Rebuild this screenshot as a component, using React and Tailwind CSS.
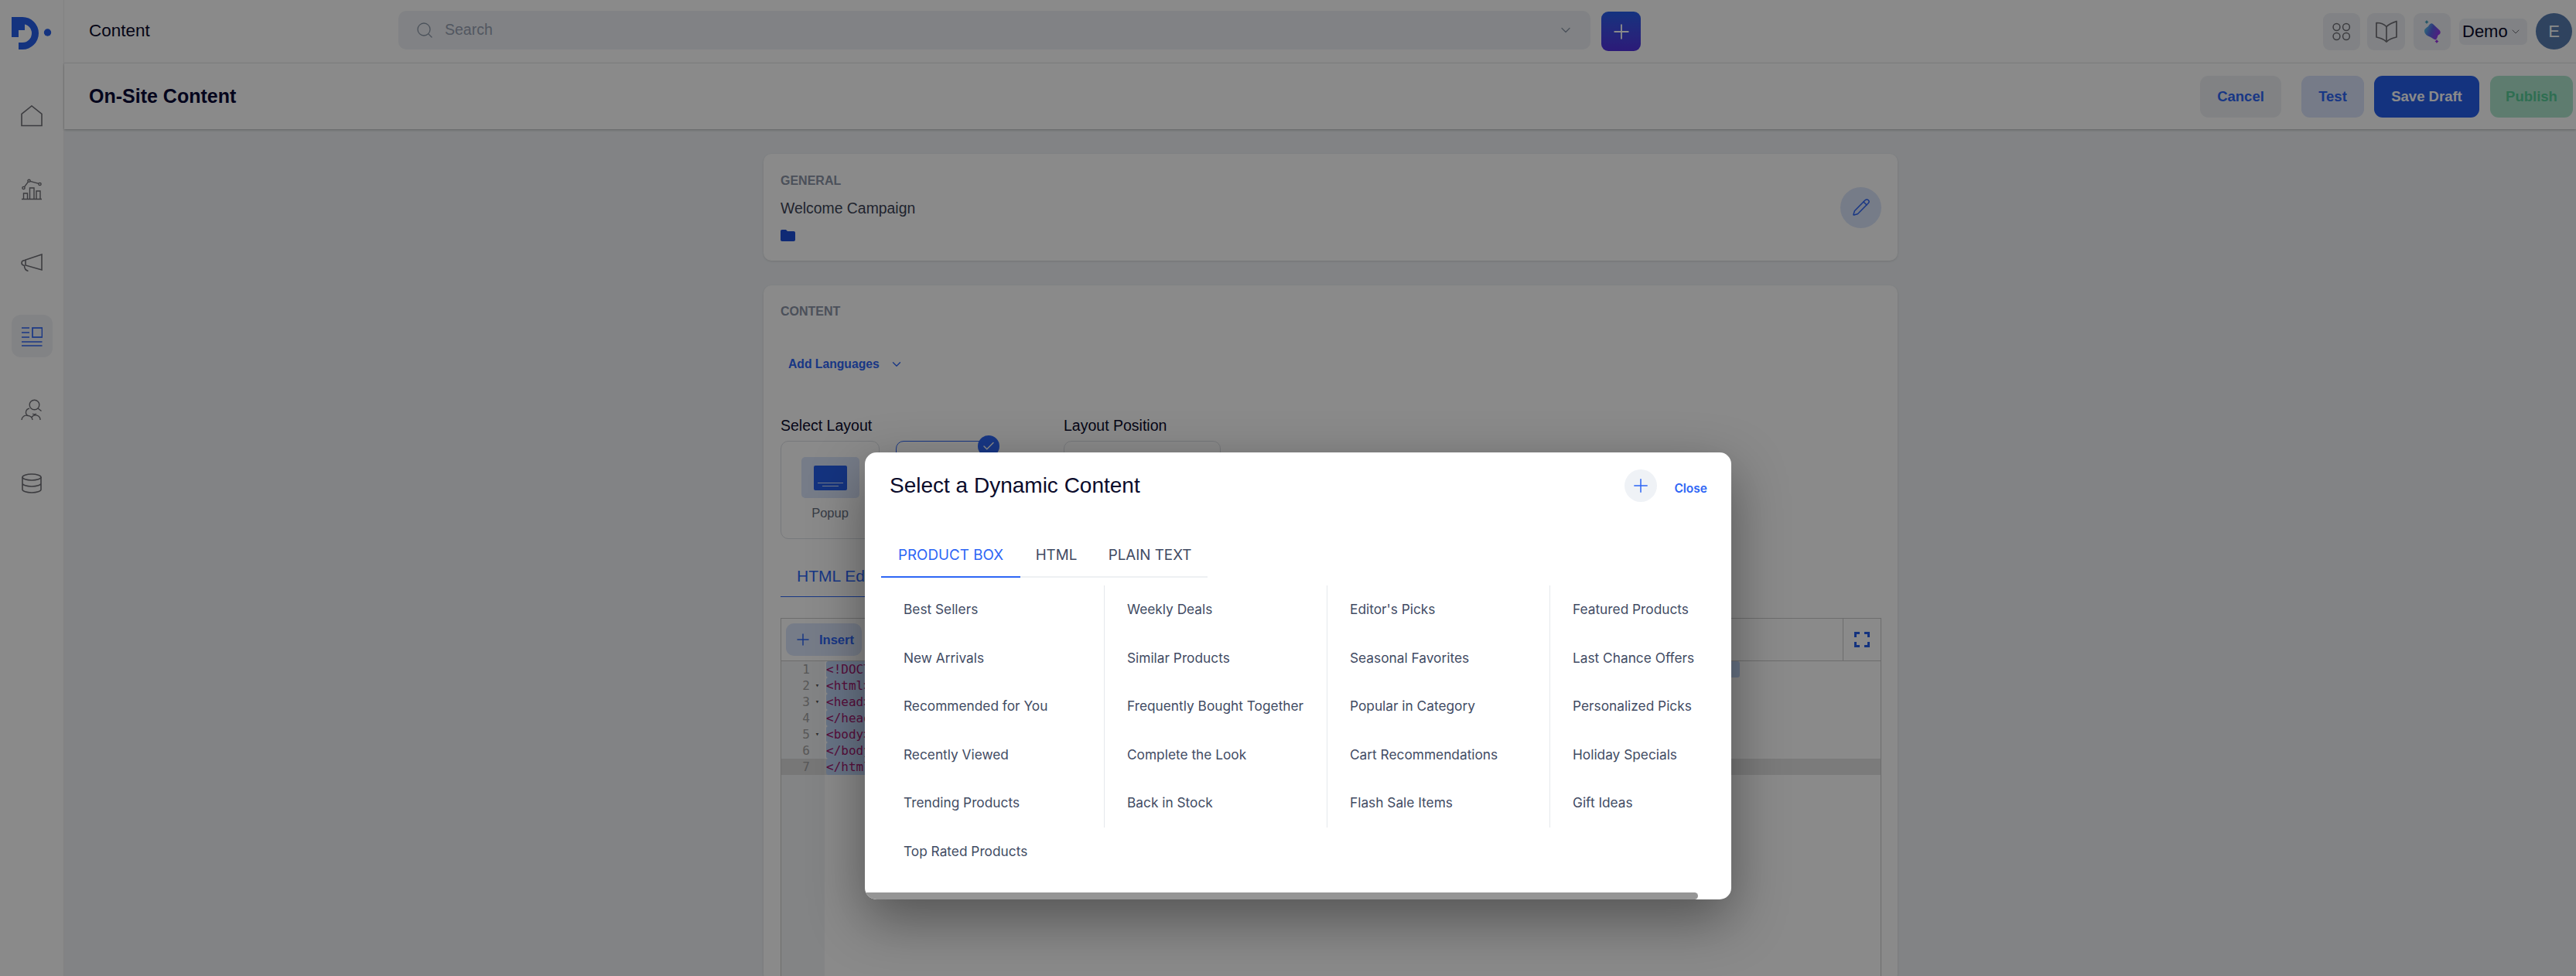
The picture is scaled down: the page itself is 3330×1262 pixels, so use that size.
import { Search, ChevronDown, Plus, Pencil, Check } from "lucide-react";

const sans = "font-['Liberation_Sans',Arial,sans-serif]";
const inter = "font-['Inter',sans-serif]";

const items = [
  "Best Sellers", "Weekly Deals", "Editor's Picks", "Featured Products",
  "New Arrivals", "Similar Products", "Seasonal Favorites", "Last Chance Offers",
  "Recommended for You", "Frequently Bought Together", "Popular in Category", "Personalized Picks",
  "Recently Viewed", "Complete the Look", "Cart Recommendations", "Holiday Specials",
  "Trending Products", "Back in Stock", "Flash Sale Items", "Gift Ideas",
  "Top Rated Products",
];

const codeLines = [
  { n: 1, text: "<!DOCTYPE html>", w: "w-[1181px]" },
  { n: 2, text: "<html>", fold: true, w: "w-[60px]" },
  { n: 3, text: "<head>", fold: true, w: "w-[60px]" },
  { n: 4, text: "</head>", w: "w-[70px]" },
  { n: 5, text: "<body>", fold: true, w: "w-[60px]" },
  { n: 6, text: "</body>", w: "w-[70px]" },
  { n: 7, text: "</html>", w: "w-[70px]" },
];

const Logo = () => (
  <svg width="52" height="42" viewBox="0 0 52 42" className="ml-[15px] mt-[22px]">
    <path d="M0 0H14A21 21 0 0 1 14 42H9V33H14A12 12 0 0 0 14 9H17V17H9V26H0Z" fill="#255eeb" />
    <circle cx="46.5" cy="20" r="4.7" fill="#255eeb" />
  </svg>
);

const HomeIcon = () => (
  <svg width="28" height="28" viewBox="0 0 28 28" fill="none" stroke="#707076" strokeWidth="1.6">
    <path d="M1 26.5V11.5L14 1L27 11.5V26.5Z" />
  </svg>
);

const ChartIcon = () => (
  <svg width="28" height="28" viewBox="0 0 28 28" fill="none" stroke="#707076" strokeWidth="1.4">
    <circle cx="3.5" cy="12" r="1.6" />
    <circle cx="10.5" cy="2.8" r="1.6" />
    <circle cx="24.5" cy="7" r="1.6" />
    <path d="M4.6 10.7L9.4 4.1M12 3.4L23 6.4" />
    <path d="M3.5 26V19H8.5V26M11.5 26V12H17V26M20 26V16H25V26M1 26.5H27" />
  </svg>
);

const MegaphoneIcon = () => (
  <svg width="28" height="24" viewBox="0 0 28 24" fill="none" stroke="#707076" strokeWidth="1.6">
    <path d="M27 1V21L6 15V8Z" />
    <path d="M6 8.5C2.5 8.5 1 10 1 12C1 14 2.5 15 4.5 15.5C4.5 19 6 21.5 9.5 22.5" />
  </svg>
);

const ContentIcon = () => (
  <svg width="28" height="26" viewBox="0 0 28 26" fill="none" stroke="#2e66f5" strokeWidth="1.7">
    <path d="M1 2H11M1 8H11M1 14H11M1 20H27.5M1 25H27.5" />
    <rect x="15" y="2" width="12.5" height="12" />
  </svg>
);

const UsersIcon = () => (
  <svg width="28" height="28" viewBox="0 0 28 28" fill="none" stroke="#707076" strokeWidth="1.4">
    <circle cx="17.5" cy="7.5" r="6.3" />
    <path d="M22 12L26.5 15.5" />
    <path d="M11 12.2A5 5 0 0 0 9 21.5A6 6 0 0 0 1 27" />
    <path d="M9 21.5A6 6 0 0 1 15 27M14 23.5A6 6 0 0 1 25 27M15 19A5 5 0 0 0 20 19" />
  </svg>
);

const DbIcon = () => (
  <svg width="28" height="26" viewBox="0 0 28 26" fill="none" stroke="#707076" strokeWidth="1.6">
    <ellipse cx="14" cy="5" rx="12" ry="4" />
    <path d="M2 5V21C2 23.2 7.4 25 14 25S26 23.2 26 21V5M2 13C2 15.2 7.4 17 14 17S26 15.2 26 13" />
  </svg>
);

const AppsIcon = () => (
  <svg width="28" height="28" viewBox="0 0 28 28" fill="none" stroke="#707076" strokeWidth="1.5">
    <circle cx="7.5" cy="8" r="4.4" />
    <circle cx="20" cy="8" r="4.4" />
    <circle cx="7.5" cy="20" r="4.4" />
    <circle cx="20" cy="20" r="4.4" />
  </svg>
);

const BookIcon = () => (
  <svg width="28" height="30" viewBox="0 0 28 30" fill="none" stroke="#707076" strokeWidth="1.7" strokeLinejoin="round">
    <path d="M1 3.5C6 3.5 10.5 4.5 14 8.5C17.5 4.5 22 3.5 27 1.5V22C22 23 18 24.5 14 28C10 24.5 6 23 1 22Z" />
    <path d="M14 8.5V28" />
  </svg>
);

const AiIcon = () => (
  <svg width="24" height="32" viewBox="0 0 24 32">
    <defs>
      <linearGradient id="aiGrad" x1="0" y1="0.3" x2="1" y2="0.7">
        <stop offset="0" stopColor="#55c4e4" />
        <stop offset="0.45" stopColor="#5a62e6" />
        <stop offset="1" stopColor="#a030f0" />
      </linearGradient>
    </defs>
    <path d="M2 15C2 12 5 11 7 9C9 6 11 4 13 6L21.500 14C23.500 16 23 19 20.500 20C18.500 21 19.500 24 17 26C15 27 12 24 9 22.500C6 21.500 2 19 2 15Z" fill="url(#aiGrad)" />
    <path d="M5 1L6 2.500L7.500 3.500L6 4.500L5 6L4 4.500L2.500 3.500L4 2.500Z" fill="#3f9fbf" />
    <path d="M18 26L19 27.500L20.500 28.500L19 29.500L18 31L17 29.500L15.500 28.500L17 27.500Z" fill="#9a30e8" />
  </svg>
);

const FolderIcon = () => (
  <svg width="19" height="15" viewBox="0 0 19 15">
    <path d="M0 2C0 .8.8 0 2 0H7L9 2H17C18.200 2 19 2.800 19 4V13C19 14.200 18.200 15 17 15H2C.8 15 0 14.200 0 13Z" fill="#1d4fd8" />
  </svg>
);

const FullscreenIcon = () => (
  <svg width="20" height="20" viewBox="0 0 20 20" fill="none" stroke="#255eeb" strokeWidth="3">
    <path d="M1.500 7V1.500H7M13 1.500H18.500V7M1.500 13V18.500H7M18.500 13V18.500H13" />
  </svg>
);

const PopupThumb = () => (
  <div className="w-[75px] h-[53px] rounded-[5px] bg-[#dbe5fb] flex items-center justify-center">
    <div className="w-[43px] h-[32px] rounded-[2px] bg-[#255eeb] flex flex-col items-center justify-end gap-[3px] pb-[5px]">
      <div className="w-[33px] h-px bg-[#dbe5fb]" />
      <div className="w-[21px] h-px bg-[#dbe5fb]" />
    </div>
  </div>
);

const Sidebar = () => (
  <aside className="w-[83px] shrink-0 bg-white border-r border-[#f0f0f0] flex flex-col">
    <div className="h-[82px]">
      <Logo />
    </div>
    <nav className="flex flex-col items-center gap-[40px] mt-[40px]">
      <div className="w-[53px] h-[55px] flex items-center justify-center"><HomeIcon /></div>
      <div className="w-[53px] h-[55px] flex items-center justify-center"><ChartIcon /></div>
      <div className="w-[53px] h-[55px] flex items-center justify-center"><MegaphoneIcon /></div>
      <div className="w-[53px] h-[55px] rounded-[12px] bg-[#f0f2f5] flex items-center justify-center"><ContentIcon /></div>
      <div className="w-[53px] h-[55px] flex items-center justify-center"><UsersIcon /></div>
      <div className="w-[53px] h-[55px] flex items-center justify-center"><DbIcon /></div>
    </nav>
  </aside>
);

const TopBar = () => (
  <div className="h-[82px] border-b border-[#eef0f3] bg-white flex items-center">
    <div className={`w-[432px] pl-[32px] text-[22.500px] text-[#0b0b2b] -mt-[2px] ${sans}`}>Content</div>
    <div className="w-[1541px] h-[50px] -mt-[3px] rounded-[10px] bg-[#eef1f5] flex items-center pl-[22px] pr-[22px]">
      <Search size={24} strokeWidth={1.3} className="text-[#8b97a8]" />
      <span className={`ml-[14px] text-[19.500px] text-[#98a2b3] ${sans}`}>Search</span>
      <ChevronDown size={20} strokeWidth={1.5} className="ml-auto text-[#8b97a8]" />
    </div>
    <button className="ml-[14px] w-[51px] h-[51px] rounded-[9px] bg-gradient-to-b from-[#255eeb] to-[#5030de] flex items-center justify-center">
      <Plus size={30} strokeWidth={1.500} className="text-white" />
    </button>
    <div className="ml-auto flex items-center pr-[5px]">
      <div className="w-[48px] h-[48px] rounded-[9px] bg-[#eef1f5] flex items-center justify-center"><AppsIcon /></div>
      <div className="ml-[9px] w-[49px] h-[48px] rounded-[9px] bg-[#eef1f5] flex items-center justify-center"><BookIcon /></div>
      <div className="ml-[11px] w-[48px] h-[48px] rounded-[9px] bg-[#eef1f5] flex items-center justify-center"><AiIcon /></div>
      <div className="ml-[11px] w-[88px] h-[34px] rounded-[7px] bg-[#eef1f5] flex items-center pl-[4px]">
        <span className={`text-[22px] text-[#0b0b2b] ${sans}`}>Demo</span>
        <ChevronDown size={16} strokeWidth={1.5} className="ml-[2px] text-[#707076]" />
      </div>
      <div className={`ml-[11px] w-[47px] h-[47px] rounded-full bg-[#577cb0] flex items-center justify-center text-white text-[22px] ${sans}`}>E</div>
    </div>
  </div>
);

const SubHeader = () => (
  <div className="h-[85px] bg-white shadow-[0_1px_3px_rgba(0,0,0,0.25)] flex items-center relative">
    <h1 className={`pl-[32px] text-[25px] font-bold text-[#0a0a36] ${sans}`}>On-Site Content</h1>
    <div className={`ml-auto pr-[4px] flex items-center text-[18.500px] font-bold ${sans}`}>
      <button className="w-[105px] h-[54px] rounded-[11px] bg-[#eef1f4] text-[#2e66f5]">Cancel</button>
      <button className="ml-[26px] w-[81px] h-[54px] rounded-[11px] bg-[#dae3fb] text-[#2e66f5]">Test</button>
      <button className="ml-[13px] w-[136px] h-[54px] rounded-[11px] bg-[#255eeb] text-white">Save Draft</button>
      <button className="ml-[14px] w-[107px] h-[54px] rounded-[11px] bg-[#aee6cd] text-[#57cc98]">Publish</button>
    </div>
  </div>
);

const GeneralCard = () => (
  <section className={`h-[138px] rounded-[10px] bg-white shadow-[0_1px_3px_rgba(0,0,0,0.12)] pl-[22px] pr-[21px] flex items-center justify-between ${sans}`}>
    <div className="-mt-[1px]">
      <div className="text-[16px] leading-[20px] font-bold text-[#8b95a7]">GENERAL</div>
      <div className="mt-[12px] text-[19.400px] leading-[26px] text-[#3c4456]">Welcome Campaign</div>
      <div className="mt-[15px] h-[15px]"><FolderIcon /></div>
    </div>
    <button className="w-[53px] h-[53px] rounded-full bg-[#dbe5fb] flex items-center justify-center">
      <Pencil size={24} strokeWidth={1.500} className="text-[#2e66f5]" />
    </button>
  </section>
);

const Editor = () => (
  <div className="mt-[27px] w-[1423px] h-[500px] border border-[#c9c9c9] flex flex-col">
    <div className="h-[55px] shrink-0 border-b border-[#c9c9c9] flex items-center">
      <button className={`ml-[6px] w-[98px] h-[42px] rounded-[10px] bg-[#dbe5fb] flex items-center pl-[12px] text-[16.500px] font-bold text-[#2e66f5] ${sans}`}>
        <Plus size={24} strokeWidth={1.500} className="-ml-[2px]" />
        <span className="ml-[9px]">Insert</span>
      </button>
      <div className="ml-auto w-[49px] h-full border-l border-[#c9c9c9] flex items-center justify-center"><FullscreenIcon /></div>
    </div>
    <div className="flex-1 flex font-['DejaVu_Sans_Mono',monospace] text-[16px] leading-[21px]">
      <div className="w-[56px] shrink-0 bg-[#f3f4f5]">
        {codeLines.map((l) => (
          <div key={l.n} className={`h-[21px] flex items-center justify-end text-[#a3a3a3] ${l.n === 7 ? "bg-[#dcdcdc]" : ""}`}>
            <span>{l.n}</span>
            <span className="w-[19px] flex justify-center text-[9px] text-[#555]">{l.fold ? "▾" : ""}</span>
          </div>
        ))}
      </div>
      <div className="flex-1">
        {codeLines.map((l) => (
          <div key={l.n} className={`h-[21px] pl-[2px] ${l.n === 7 ? "bg-[#e4e4e4]" : ""}`}>
            <div className={`${l.w} h-[21px] rounded-[3px] bg-[#c0d6f8] text-[#a3196f] whitespace-pre`}>{l.text}</div>
          </div>
        ))}
      </div>
    </div>
  </div>
);

const ContentCard = () => (
  <section className={`mt-[32px] h-[900px] rounded-[10px] bg-white shadow-[0_1px_3px_rgba(0,0,0,0.12)] pl-[22px] pt-[24px] ${sans}`}>
    <div className="text-[16px] leading-[20px] font-bold text-[#8b95a7]">CONTENT</div>
    <div className="mt-[48px] pl-[10px] flex items-center text-[15.700px] leading-[20px] font-bold text-[#2e66f5]">
      Add Languages
      <ChevronDown size={18} strokeWidth={1.800} className="ml-[13px]" />
    </div>
    <div className="mt-[57px] flex">
      <div className="w-[366px]">
        <div className="text-[19.500px] leading-[24px] text-[#0b0b2b]">Select Layout</div>
        <div className="mt-[8px] flex gap-[21px]">
          <div className="w-[128px] h-[127px] rounded-[10px] border border-[#dde0e5] flex flex-col items-center pt-[20px]">
            <PopupThumb />
            <span className="mt-[7px] text-[16.500px] text-[#67707f]">Popup</span>
          </div>
          <div className="relative w-[128px] h-[127px] rounded-[10px] border border-[#2e66f5]">
            <div className="absolute -top-[8px] left-[105px] w-[28px] h-[28px] rounded-full bg-[#2e66f5] flex items-center justify-center">
              <Check size={18} strokeWidth={2} className="text-white" />
            </div>
          </div>
        </div>
      </div>
      <div>
        <div className="text-[19.500px] leading-[24px] text-[#0b0b2b]">Layout Position</div>
        <div className="mt-[8px] w-[203px] h-[127px] rounded-[10px] border border-[#dde0e5]" />
      </div>
    </div>
    <div className="mt-[33px] w-[190px] border-b border-[#2e66f5] pl-[21px] h-[42px] text-[21px] leading-[30px] text-[#2e66f5]">HTML Editor</div>
    <Editor />
  </section>
);

const DynamicContentModal = () => (
  <div className={`absolute left-[1118px] top-[585px] w-[1120px] h-[578px] rounded-[15px] bg-white overflow-hidden shadow-[0_25px_70px_rgba(0,0,0,0.4)] ${inter}`}>
    <div className="h-[85px] pl-[32px] pr-[31px] flex items-center">
      <h2 className={`text-[28px] text-[#0b0b2b] ${sans}`}>Select a Dynamic Content</h2>
      <button className="ml-auto w-[42px] h-[42px] rounded-full bg-[#eff2f6] flex items-center justify-center">
        <Plus size={28} strokeWidth={1.300} className="text-[#2e66f5]" />
      </button>
      <button className="ml-[22px] mt-[9px] text-[15.500px] font-semibold text-[#2e66f5]">Close</button>
    </div>
    <div className="ml-[21px] mt-[21px] w-[422px] h-[56px] flex border-b-2 border-[#eef0f3] text-[18.800px]">
      <div className="w-[180px] h-[56px] shrink-0 flex items-center justify-center border-b-2 border-[#2e66f5] text-[#2e66f5]">PRODUCT BOX</div>
      <div className="w-[93px] h-[54px] shrink-0 flex items-center justify-center text-[#414b63]">HTML</div>
      <div className="w-[149px] h-[54px] shrink-0 flex items-center justify-center text-[#414b63]">PLAIN TEXT</div>
    </div>
    <div className="ml-[21px] mt-[10px] w-[1152px] grid grid-cols-[repeat(4,288px)] auto-rows-[62.500px] text-[17.300px] text-[#414b63]">
      {items.map((label, i) => (
        <div key={label} className={`flex items-center pl-[29px] whitespace-nowrap ${i % 4 !== 0 && i < 20 ? "border-l border-[#e5e8ec]" : ""}`}>
          {label}
        </div>
      ))}
    </div>
    {/* horizontal scrollbar thumb */}
    <div className="absolute left-0 bottom-0 w-[1077px] h-[9px] rounded-r-full bg-[#959595]" />
  </div>
);

export default function App() {
  return (
    <div className="relative w-[3330px] h-[1262px] overflow-hidden flex bg-[#f0f3f6]">
      <Sidebar />
      <main className="flex-1 flex flex-col min-w-0">
        <TopBar />
        <SubHeader />
        <div className="flex-1 overflow-hidden pt-[32px] pl-[904px]">
          <div className="w-[1466px]">
            <GeneralCard />
            <ContentCard />
          </div>
        </div>
      </main>
      <div className="absolute inset-0 bg-black/46" />
      <DynamicContentModal />
    </div>
  );
}
